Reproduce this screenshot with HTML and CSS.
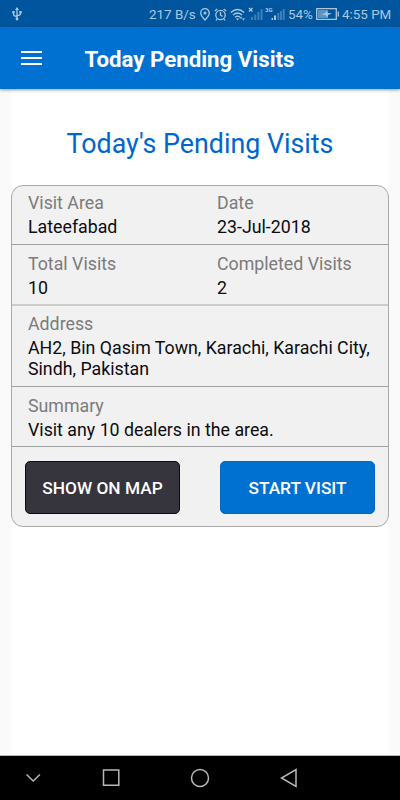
FILE: index.html
```html
<!DOCTYPE html>
<html lang="en">
<head>
<meta charset="utf-8">
<title>Today Pending Visits</title>
<link rel="stylesheet" href="styles.css">
</head>
<body>
<div class="status">
  <svg class="usb" width="10" height="14" viewBox="0 0 10 14"><path d="M5 1.5V12M1.5 5v2.2Q1.5 9 5 9.5M8.500 5v2Q8.500 8.300 5 8.700"/><path class="fill" d="M5 0l2 3H3zM.3 4h2.400v2.200H.3zM7.300 4h2.400v2.200H7.300z"/><circle class="fill" cx="5" cy="12" r="1.400"/></svg>
  <span class="speed">217 B/s</span>
  <svg class="pin" width="10" height="13" viewBox="0 0 10 13"><path d="M5 12Q.7 7.700.7 5a4.300 4.300 0 0 1 8.600 0Q9.300 7.700 5 12z"/><circle class="fill" cx="5" cy="5" r="1.500"/></svg>
  <svg class="alarm" width="13" height="13" viewBox="0 0 13 13"><circle cx="6.500" cy="7" r="4.700"/><path d="M6.500 4v3.200l2 1.200M.8 3l2.500-2M12.200 3L9.700 1M3 11l-1 1.500M10 11l1 1.500"/></svg>
  <svg class="wifi" width="16" height="13" viewBox="0 0 16 13"><path d="M.8 4.500Q7.500-1.500 14.200 4.500M3 7Q7.500 3 12 7M5 9.300Q7.500 7 10 9.300"/><path class="fill" d="M7.500 12.500L5.800 10.500h3.400zM11 8.500l1.500 2h-3zM13.500 12.500l-1.500-2h3z"/></svg>
  <svg class="signal" width="16" height="14" viewBox="0 0 16 14"><path d="M1 1l3.500 3.500M4.500 1L1 4.500"/><path class="dim" d="M3 10h2v3H3zM6.200 7.500h2V13h-2zM9.400 5h2v8h-2zM12.600 2h2v11h-2z"/></svg>
  <div class="cell"><span>3G</span><svg width="20" height="14" viewBox="0 0 20 14"><path class="fill" d="M6.500 11H8v2H6.500zM9 8.500h2V13H9z"/><path class="dim" d="M12.300 6h2v7h-2zM15 4h2v9h-2zM17.700 2h2v11h-2z"/></svg></div>
  <span class="percent">54%</span>
  <svg class="battery" width="24" height="12" viewBox="0 0 24 12"><path d="M.7.7h19.600v10.600H.7zM22.300 3.500v5"/><path class="charge" d="M2 2h10v8H2z"/><path class="fill" d="M5 6.500L9.500 5l.7-2 1.800 2 4 .5-4 1.500-.8 2.500-1.700-2.500z"/></svg>
  <span class="clock">4:55 PM</span>
</div>
<header class="bar">
  <div class="menu"><i></i><i></i><i></i></div>
  <h1>Today Pending Visits</h1>
</header>
<main>
  <h2>Today's Pending Visits</h2>
  <section class="card">
    <div class="row cols first">
      <div><label>Visit Area</label><p>Lateefabad</p></div>
      <div><label>Date</label><p>23-Jul-2018</p></div>
    </div>
    <div class="row cols light">
      <div><label>Total Visits</label><p>10</p></div>
      <div><label>Completed Visits</label><p>2</p></div>
    </div>
    <div class="row address"><label>Address</label><p>AH2, Bin Qasim Town, Karachi, Karachi City,<br>Sindh, Pakistan</p></div>
    <div class="row"><label>Summary</label><p>Visit any 10 dealers in the area.</p></div>
    <div class="actions"><button class="map">SHOW ON MAP</button><button class="start">START VISIT</button></div>
  </section>
</main>
<nav>
  <svg width="400" height="44" viewBox="0 0 400 44"><path d="M26.500 18.500l6.700 6.500 6.700-6.500M103.500 14h15.300v15.300h-15.300zM296 13.500v17L281.500 22z"/><circle cx="200" cy="22" r="8.500"/></svg>
</nav>
</body>
</html>
```
FILE: styles.css
```css
* { box-sizing: border-box; }
body { margin: 0; width: 400px; height: 800px; display: flex; flex-direction: column; overflow: hidden; background: #fafafa; font-family: Roboto, sans-serif; }
h1, h2, p { margin: 0; font-weight: 400; }

.status { height: 27px; flex: none; display: flex; align-items: center; background: #00569e; color: #a9c7e1; font-size: 13.400px; padding: 1px 0 0 12px; white-space: nowrap; }
.status svg { flex: none; fill: none; stroke: #a9c7e1; stroke-width: 1.300; }
.status .fill { fill: #a9c7e1; stroke: none; }
.status .dim { fill: #3e7fb7; stroke: none; }
.status .charge { fill: #5c93c2; stroke: none; }
.speed { width: 47px; margin-left: 127px; }
.pin { margin-left: 4px; }
.alarm { margin-left: 4px; }
.wifi { margin-left: 3px; }
.signal { margin-left: 2px; }
.cell { position: relative; width: 20px; height: 14px; margin-left: 1px; }
.cell span { position: absolute; left: 0; top: 0; font-size: 6px; line-height: 6px; font-weight: 700; }
.cell svg { display: block; }
.percent { width: 25px; margin-left: 3px; }
.battery { margin-left: 3px; }
.clock { margin-left: 2px; }

.bar { height: 62px; flex: none; display: flex; align-items: center; background: #0071d1; box-shadow: 0 1px 3px rgba(0, 0, 0, .4); position: relative; padding-left: 21px; }
.menu { width: 21px; display: flex; flex-direction: column; gap: 4px; }
.menu i { height: 2px; background: #fff; }
.bar h1 { margin-left: 42.500px; color: #fff; font-size: 22.250px; font-weight: 700; white-space: nowrap; padding-top: 2px; }

main { flex: 1; margin: 0 11px; background: #fff; padding-top: 38px; }
h2 { height: 34px; line-height: 34px; font-size: 26.800px; text-align: center; color: #0066cc; margin-bottom: 24px; white-space: nowrap; }
.card { height: 342px; border: 1px solid #a9a9a9; border-radius: 12px; background: #f1f1f1; font-size: 17.780px; line-height: 21px; color: #0c0c10; }
.row { height: 60px; padding: 9px 0 0 16px; border-bottom: 1px solid #a0a0a0; white-space: nowrap; }
.first { height: 59px; padding-top: 7px; }
.light { height: 61px; border-bottom: 2px solid #cdcdcd; }
.address { height: 81px; padding-top: 8px; }
.cols { display: grid; grid-template-columns: 189px 1fr; }
label { display: block; color: #7b7b7b; }
.row p { margin-top: 3px; }
.actions { display: flex; justify-content: space-between; padding: 14px 13px 0 13px; }
button { width: 155px; height: 53px; padding: 0; border-radius: 5px; font: 500 17.300px Roboto, sans-serif; color: #fff; }
.map { background: #36343c; border: 1px solid #0c0b10; }
.start { background: #0071d1; border: 1px solid #0068c8; }

nav { height: 45px; flex: none; background: #000; border-top: 1px solid #b3b8b8; }
nav svg { display: block; fill: none; stroke: #b8b8b8; stroke-width: 1.500; }
```
